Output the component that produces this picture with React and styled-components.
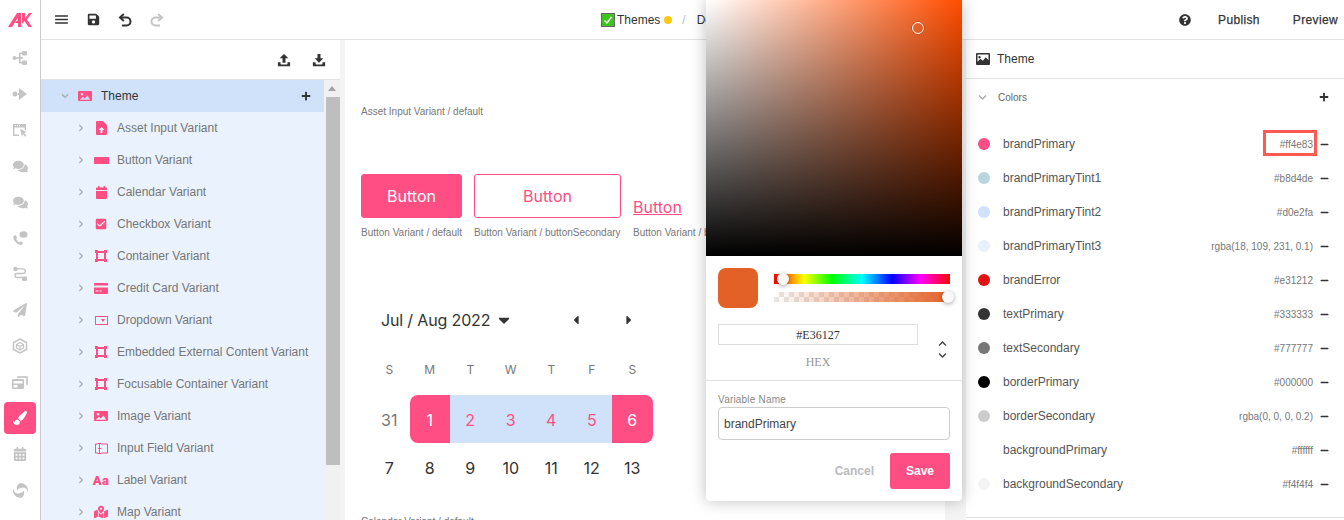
import styled, { createGlobalStyle } from 'styled-components'
import { MdMenu, MdCheckBox } from 'react-icons/md'
import { FaQuestionCircle, FaComments, FaPaperPlane, FaCalendarAlt, FaMapMarkedAlt, FaPaintBrush, FaSave, FaCaretDown, FaCaretLeft, FaCaretRight, FaChevronUp, FaChevronDown, FaChevronRight, FaPlus, FaMinus } from 'react-icons/fa'

const PINK = '#ff4e83'

const GlobalStyle = createGlobalStyle`
    html, body, #root {
        margin: 0;
        height: 100%;
        overflow: hidden;
    }
    body {
        font-family: "Liberation Sans", Arial, sans-serif;
        color: #333;
        background: #fff;
    }
`

const Page = styled.div`
    position: relative;
    display: flex;
    width: 1344px;
    height: 520px;
    overflow: hidden;
`

const Rail = styled.nav`
    display: flex;
    flex-direction: column;
    flex: none;
    width: 40px;
    border-right: 1px solid #ccc;
`

const LogoBox = styled.div`
    display: flex;
    align-items: center;
    justify-content: center;
    height: 40px;
`

const RailItem = styled.div`
    display: flex;
    align-items: center;
    justify-content: center;
    flex: none;
    width: ${p => p.$active ? '32px' : '40px'};
    height: ${p => p.$active ? '32px' : '36px'};
    margin: ${p => p.$active ? '2px 4px' : '0'};
    border-radius: 4px;
    color: ${p => p.$active ? '#fff' : '#c4c4c4'};
    background-color: ${p => p.$active ? PINK : 'transparent'};
`

const Main = styled.div`
    display: flex;
    flex-direction: column;
    flex: 1;
    min-width: 0;
`

const TopBar = styled.header`
    display: flex;
    align-items: center;
    flex: none;
    height: 39px;
    padding-left: 4px;
    border-bottom: 1px solid #e2e2e2;
`

const ToolSlot = styled.div`
    display: flex;
    align-items: center;
    justify-content: center;
    width: 32px;
    height: 32px;
    color: ${p => p.$disabled ? '#c4c4c4' : '#333'};
`

const Crumbs = styled.div`
    display: flex;
    align-items: center;
    margin-left: 428px;
    font-size: 12px;
    color: #333;
`

const DoneBox = styled.span`
    display: flex;
    align-items: center;
    justify-content: center;
    width: 12px;
    height: 12px;
    margin-right: 2px;
    border: 1px solid #666;
    background: #3fc41f;
    color: #fff;
`

const StatusDot = styled.span`
    width: 8px;
    height: 8px;
    margin-left: 4px;
    border-radius: 50%;
    background: #ffc813;
`

const Slash = styled.span`
    margin: 0 11px 0 10px;
    color: #bbb;
`

const TopActions = styled.div`
    display: flex;
    align-items: center;
    margin-left: auto;
    font-size: 12px;
    font-weight: 500;
    color: #333;
`

const HelpSlot = styled.span`
    display: flex;
    margin-right: 27px;
`

const TopLink = styled.span`
    margin-right: ${p => p.$right}px;
    letter-spacing: 0.35px;
    -webkit-text-stroke: 0.25px #333;
`

const Workspace = styled.div`
    display: flex;
    flex: 1;
    min-height: 0;
    background: #f4f4f4;
`

const TreePanel = styled.aside`
    display: flex;
    flex-direction: column;
    flex: none;
    width: 299px;
    background: #fff;
`

const TreeTools = styled.div`
    display: flex;
    align-items: center;
    justify-content: flex-end;
    flex: none;
    height: 39px;
    padding-right: 4px;
    border-bottom: 1px solid #e2e2e2;
`

const TreeTool = styled.span`
    display: flex;
    align-items: center;
    justify-content: center;
    width: 35px;
    color: #333;
`

const TreeBody = styled.div`
    display: flex;
    flex: 1;
    min-height: 0;
`

const TreeList = styled.div`
    flex: 1;
    overflow: hidden;
    background: #e9f2fd;
`

const TreeRow = styled.div`
    display: flex;
    align-items: center;
    height: 32px;
    padding-left: ${p => p.$root ? '18px' : '34px'};
    font-size: 12px;
    color: ${p => p.$root ? '#333' : '#777'};
    background: ${p => p.$root ? '#d0e2fa' : 'transparent'};
`

const Chevron = styled.span`
    display: flex;
    align-items: center;
    justify-content: center;
    flex: none;
    width: 12px;
    color: #aaa;
`

const TreeIcon = styled.span`
    display: flex;
    align-items: center;
    justify-content: center;
    flex: none;
    width: 28px;
    margin-right: 2px;
    color: ${PINK};
`

const AaIcon = styled.span`
    font-family: Roboto, sans-serif;
    font-size: 13px;
    font-weight: 900;
    letter-spacing: 0.4px;
    line-height: 1;
`

const RootLabel = styled.span`
    flex: 1;
`

const AddButton = styled.span`
    display: flex;
    margin-right: ${p => p.$inset}px;
    color: #333;
`

const ScrollTrack = styled.div`
    display: flex;
    flex-direction: column;
    align-items: center;
    flex: none;
    width: 16px;
    background: #f1f1f1;
`

const ScrollArrow = styled.span`
    width: 0;
    height: 0;
    margin: 6px 0 6px;
    border-left: 4px solid transparent;
    border-right: 4px solid transparent;
    border-bottom: 5px solid #a3a3a3;
`

const ScrollThumb = styled.div`
    width: 14px;
    height: 368px;
    margin-left: 1px;
    background: #bebebe;
`

const Canvas = styled.main`
    flex: none;
    width: 600px;
    margin-left: 5px;
    padding: 66px 0 0 16px;
    box-sizing: border-box;
    overflow: hidden;
    background: #fff;
`

const Caption = styled.div`
    font-size: 10px;
    line-height: 12px;
    color: #777;
    white-space: nowrap;
`

const ButtonRow = styled.div`
    display: flex;
    gap: 12px;
    margin-top: 56px;
`

const ButtonCol = styled.div`
    display: flex;
    flex-direction: column;
    justify-content: flex-end;
    gap: 9px;
`

const DemoButton = styled.div`
    display: flex;
    align-items: center;
    justify-content: center;
    box-sizing: border-box;
    width: ${p => p.$width}px;
    height: 44px;
    border: 1px solid ${PINK};
    border-radius: 3px;
    font-family: Inter, sans-serif;
    font-size: 16px;
    color: ${p => p.$filled ? '#fff' : PINK};
    background: ${p => p.$filled ? PINK : '#fff'};
`

const LinkButton = styled.span`
    margin-bottom: 1px;
    font-family: Inter, sans-serif;
    font-size: 16px;
    color: ${PINK};
    text-decoration: underline;
`

const Calendar = styled.section`
    width: 284px;
    margin: 69px 0 25px 8px;
    font-family: Inter, sans-serif;
`

const CalendarHead = styled.div`
    display: flex;
    align-items: center;
    height: 24px;
    padding-left: 12px;
    font-size: 16px;
    letter-spacing: -0.15px;
    color: #333;
`

const MonthLabel = styled.span`
    width: 114px;
`

const HeadCaret = styled.span`
    display: flex;
    color: #333;
    margin-left: ${p => p.$gap}px;
`

const WeekGrid = styled.div`
    display: grid;
    grid-template-columns: repeat(7, 40.5px);
`

const WeekDay = styled.div`
    display: flex;
    align-items: center;
    justify-content: center;
    height: 36px;
    font-size: 12px;
    color: #777;
`

const WeekHead = styled(WeekGrid)`
    margin-top: 19px;
    margin-bottom: 8px;
`

const DayCell = styled.div`
    display: flex;
    align-items: center;
    justify-content: center;
    height: 48px;
    padding-top: 1px;
    box-sizing: border-box;
    font-size: 16px;
    color: ${p => p.$edge ? '#fff' : p.$mid ? PINK : p.$muted ? '#777' : '#333'};
    background: ${p => p.$edge ? PINK : p.$mid ? '#d0e2fa' : 'transparent'};
    border-radius: ${p => p.$edge === 'start' ? '8px 0 0 8px' : p.$edge === 'end' ? '0 8px 8px 0' : '0'};
`

const RightPanel = styled.aside`
    flex: none;
    width: 378px;
    margin-left: 21px;
    background: #fff;
`

const PanelTitle = styled.div`
    display: flex;
    align-items: center;
    gap: 7px;
    height: 38px;
    padding-left: 10px;
    border-bottom: 1px solid #e2e2e2;
    font-size: 12px;
    color: #333;
`

const GroupHead = styled.div`
    display: flex;
    align-items: center;
    height: 36px;
    padding: 0 15px 0 10px;
    font-size: 10px;
    color: #666;
`

const GroupName = styled.span`
    flex: 1;
    margin-left: 10px;
`

const ColorList = styled.div`
    padding: 12px 0 16px;
    border-bottom: 1px solid #e2e2e2;
`

const ColorRow = styled.div`
    position: relative;
    display: flex;
    align-items: center;
    height: 34px;
    padding: 0 15px 0 12px;
`

const ColorDot = styled.span`
    flex: none;
    width: 12px;
    height: 12px;
    border-radius: 50%;
    background: ${p => p.color};
`

const ColorName = styled.span`
    flex: 1;
    margin-left: 13px;
    font-size: 12px;
    color: #555;
`

const ColorValue = styled.span`
    font-size: 10px;
    color: #777;
`

const RowMinus = styled.span`
    display: flex;
    margin-left: 7px;
    color: #333;
`

const Highlight = styled.span`
    position: absolute;
    top: 3px;
    right: 27px;
    box-sizing: border-box;
    width: 54px;
    height: 26px;
    border: 3px solid #ff5a4f;
`

const Picker = styled.div`
    position: absolute;
    top: 0;
    left: 706px;
    display: flex;
    flex-direction: column;
    width: 256px;
    height: 501px;
    border-radius: 0 0 4px 4px;
    background: #fff;
    box-shadow: 0 0 16px rgba(0, 0, 0, 0.25);
`

const SatField = styled.div`
    position: relative;
    flex: none;
    height: 256px;
    background:
        linear-gradient(to top, #000, rgba(0, 0, 0, 0)),
        linear-gradient(to right, #fff, rgba(255, 255, 255, 0)),
        #ff4d00;
`

const SatKnob = styled.span`
    position: absolute;
    top: 22px;
    left: 206px;
    box-sizing: border-box;
    width: 12px;
    height: 12px;
    border: 1px solid #fff;
    border-radius: 50%;
    box-shadow: 0 0 0 0.5px rgba(0, 0, 0, 0.4);
`

const SliderRow = styled.div`
    display: flex;
    gap: 16px;
    padding: 12px 12px 0;
`

const Swatch = styled.div`
    flex: none;
    width: 40px;
    height: 40px;
    border-radius: 8px;
    background: #e36127;
`

const Sliders = styled.div`
    display: flex;
    flex-direction: column;
    flex: 1;
    gap: 8px;
    padding-top: 6px;
`

const Slider = styled.div`
    position: relative;
    height: 10px;
`

const HueTrack = styled(Slider)`
    background: linear-gradient(to right, #f00 0%, #ff0 17%, #0f0 33%, #0ff 50%, #00f 67%, #f0f 83%, #f00 100%);
`

const AlphaTrack = styled(Slider)`
    background:
        linear-gradient(to right, rgba(227, 97, 39, 0), #e36127),
        repeating-conic-gradient(#e6e6e6 0% 25%, #fff 0% 50%) 0 0 / 10px 10px;
`

const Thumb = styled.span`
    position: absolute;
    top: -1px;
    left: ${p => p.$left}px;
    width: 12px;
    height: 12px;
    border-radius: 50%;
    background: #f8f8f8;
    box-shadow: 0 1px 4px rgba(0, 0, 0, 0.37);
`

const HexRow = styled.div`
    display: flex;
    padding: 16px 12px 0;
`

const HexField = styled.div`
    display: flex;
    flex-direction: column;
    width: 200px;
`

const HexValue = styled.div`
    box-sizing: border-box;
    height: 21px;
    border: 1px solid #ddd;
    font-family: "Liberation Serif", serif;
    font-size: 12px;
    line-height: 20px;
    text-align: center;
    color: #333;
`

const HexLabel = styled.div`
    margin-top: 10px;
    font-family: "Liberation Serif", serif;
    font-size: 12px;
    line-height: 14px;
    text-align: center;
    color: #969696;
`

const ModeToggle = styled.div`
    display: flex;
    flex-direction: column;
    align-items: center;
    gap: 3px;
    margin: 15px 0 0 20px;
    color: #444;
`

const Divider = styled.div`
    height: 1px;
    margin-top: 11px;
    background: #e2e2e2;
`

const FormBlock = styled.div`
    padding: 13px 12px 0;
`

const FieldLabel = styled.div`
    font-size: 10px;
    line-height: 12px;
    letter-spacing: 0.2px;
    color: #888;
`

const NameInput = styled.div`
    box-sizing: border-box;
    height: 33px;
    margin-top: 1px;
    padding-left: 5px;
    border: 1px solid #ccc;
    border-radius: 4px;
    font-size: 12px;
    line-height: 33px;
    color: #444;
`

const PickerActions = styled.div`
    display: flex;
    align-items: center;
    justify-content: flex-end;
    gap: 16px;
    margin-top: 13px;
    font-size: 12px;
    font-weight: 700;
`

const CancelText = styled.span`
    color: #bbb;
`

const SaveButton = styled.span`
    display: flex;
    align-items: center;
    justify-content: center;
    width: 60px;
    height: 36px;
    border-radius: 3px;
    color: #fff;
    background: ${PINK};
`

const Logo = () => (
    <svg width="24" height="14" viewBox="0 0 24 14" fill={PINK}>
        <path d="M0 14 L9 0 H13 V14 H10 V10 H7 L9 7.500 H10 V4.500 L4 14 Z" />
        <path d="M14 0 H17 V5.500 L21 0 H24 L19 6.500 L24 14 H20.500 L16.500 8 L14 11 Z" />
    </svg>
)

const Hub = () => (
    <svg width="16" height="16" viewBox="0 0 16 16" fill="currentColor">
        <circle cx="2.500" cy="8" r="2" />
        <path d="M4 7.200h3V3.500a1 1 0 0 1 1-1h2v1.600H8.600v3.100H11v1.600H8.600v3.100H10v1.600H8a1 1 0 0 1-1-1V8.800H4z" />
        <rect x="10" y="1" width="5" height="4.500" rx="1" />
        <rect x="10" y="10.500" width="5" height="4.500" rx="1" />
    </svg>
)

const DotArrow = () => (
    <svg width="16" height="14" viewBox="0 0 16 14" fill="currentColor">
        <circle cx="3" cy="7" r="2.500" />
        <path d="M6 6h1V1l8 6-8 6V8H6z" />
    </svg>
)

const WindowPick = () => (
    <svg width="16" height="16" viewBox="0 0 16 16" fill="currentColor">
        <path d="M1 2h13v6h-1.400V5.500H2.400v7H7V14H1zM3 3v1h1V3zm2 0v1h1V3zm2 0v1h1V3z" fillRule="evenodd" />
        <path d="M8 7l7 3-3 1 2.500 2.500-1.200 1.200L10.800 12 10 15z" />
    </svg>
)

const PhoneChat = () => (
    <svg width="16" height="16" viewBox="0 0 16 16" fill="currentColor">
        <path d="M3.500 5 1.300 6.200C1.300 11 5 14.800 9.800 15l1.300-2.400-2.800-1.400-1 1.200C5.800 11.500 4.700 10.200 4.100 8.700l1.100-1z" />
        <ellipse cx="11.500" cy="4.500" rx="4" ry="3.300" />
    </svg>
)

const RouteIcon = () => (
    <svg width="16" height="16" viewBox="0 0 16 16" fill="currentColor">
        <circle cx="3.500" cy="3" r="2.200" />
        <rect x="10" y="10.500" width="5" height="4.500" rx="1" />
        <path d="M5 2.200h6a3 3 0 0 1 0 6H5a1.200 1.200 0 0 0 0 2.600h5v1.400H5a2.600 2.600 0 0 1 0-5.400h6a1.600 1.600 0 0 0 0-3.200H5z" />
    </svg>
)

const CubeIcon = () => (
    <svg width="16" height="16" viewBox="0 0 16 16" fill="none" stroke="currentColor">
        <path d="M8 1 14.500 4.500v7L8 15l-6.500-3.500v-7z" strokeWidth="1.500" />
        <path d="M8 4.500l3.500 2v3.500L8 12l-3.500-2V6.500z M8 8.500v3.500 M8 8.500l3.500-2 M8 8.500l-3.500-2" strokeWidth="1.200" />
    </svg>
)

const GalleryIcon = () => (
    <svg width="16" height="14" viewBox="0 0 16 14" fill="currentColor">
        <path d="M5 2a1 1 0 0 1 1-1h9a1 1 0 0 1 1 1v7a1 1 0 0 1-1 1h-1V3H5z" opacity="0.85" />
        <path d="M0 5a1 1 0 0 1 1-1h10a1 1 0 0 1 1 1v8a1 1 0 0 1-1 1H1a1 1 0 0 1-1-1zm1.500 1v2.500h9V6zM1.500 10v2.500h4V10z" fillRule="evenodd" />
    </svg>
)

const SwirlIcon = () => (
    <svg width="15" height="15" viewBox="0 0 15 15" fill="currentColor">
        <path d="M7.500 0a7.500 7.500 0 0 1 7.300 9.200 5 5 0 0 0-7.300-4.200 3 3 0 0 0-2.900 2.500A5 5 0 0 1 7.500 0z" />
        <path d="M7.500 15A7.500 7.500 0 0 1 .2 5.800 5 5 0 0 0 7.500 10a3 3 0 0 0 2.900-2.500A5 5 0 0 1 7.500 15z" />
    </svg>
)

const UndoSvg = styled.svg`
    transform: ${p => p.$flip ? 'scaleX(-1)' : 'none'};
`

const UndoIcon = ({ flip }) => (
    <UndoSvg $flip={flip} width="14" height="14" viewBox="0 0 14 14" fill="none" stroke="currentColor" strokeWidth="2">
        <path d="M3 4.500h5.500a4 4 0 0 1 0 8H4" />
        <path d="M5.800 1 2 4.500 5.800 8" />
    </UndoSvg>
)

const TrayArrow = ({ down }) => (
    <svg width="14" height="14" viewBox="0 0 16 16" fill="currentColor">
        <path d={down ? 'M6.300 1h3.400v5H13L8 11 3 6h3.300z' : 'M8 1l5 5H9.700v5H6.300V6H3z'} />
        <path d="M1 10.500h3v1.500a1 1 0 0 0 1 1h6a1 1 0 0 0 1-1v-1.500h3V15H1z" />
    </svg>
)

const PictureIcon = ({ outline }) => (
    <svg width="14" height="12" viewBox="0 0 14 12" fill="currentColor">
        {outline
            ? <path fillRule="evenodd" d="M1 0h12a1 1 0 0 1 1 1v10a1 1 0 0 1-1 1H1a1 1 0 0 1-1-1V1a1 1 0 0 1 1-1zm.5 1.500v7.200l3-3 2.300 2 3-3.500 2.700 3V1.500zM3.500 3a1.200 1.200 0 1 1 0 2.400 1.200 1.200 0 0 1 0-2.400z" />
            : <path fillRule="evenodd" d="M1 1h12a1 1 0 0 1 1 1v8a1 1 0 0 1-1 1H1a1 1 0 0 1-1-1V2a1 1 0 0 1 1-1zm.8 8.800h10.400L9.500 5.500 6.800 8.500 4.800 6.700zM4 3a1.300 1.300 0 1 0 0 2.600A1.300 1.300 0 0 0 4 3z" />}
    </svg>
)

const FileUp = () => (
    <svg width="11" height="14" viewBox="0 0 11 14" fill="currentColor">
        <path fillRule="evenodd" d="M1 0h6l4 4v9a1 1 0 0 1-1 1H1a1 1 0 0 1-1-1V1a1 1 0 0 1 1-1zM5.500 6 2.500 9h2v3h2V9h2z" />
    </svg>
)

const SolidBar = () => (
    <svg width="15" height="7" viewBox="0 0 15 7" fill="currentColor">
        <rect width="15" height="7" rx="0.500" />
    </svg>
)

const CalendarSolid = () => (
    <svg width="11" height="13" viewBox="0 0 11 13" fill="currentColor">
        <path d="M2 0h1.500v1.500h4V0H9v1.500h1a1 1 0 0 1 1 1V4H0V2.500a1 1 0 0 1 1-1h1zM0 5h11v7a1 1 0 0 1-1 1H1a1 1 0 0 1-1-1z" />
    </svg>
)

const CardSolid = () => (
    <svg width="14" height="11" viewBox="0 0 14 11" fill="currentColor">
        <path fillRule="evenodd" d="M1 0h12a1 1 0 0 1 1 1v1.500H0V1a1 1 0 0 1 1-1zM0 4.500h14V10a1 1 0 0 1-1 1H1a1 1 0 0 1-1-1zM1.500 7.500v1h3v-1zm4 0v1h2v-1z" />
    </svg>
)

const Frame = () => (
    <svg width="12" height="12" viewBox="0 0 12 12" fill="currentColor">
        <path fillRule="evenodd" d="M0 0h3v1h6V0h3v3h-1v6h1v3H9v-1H3v1H0V9h1V3H0zm3 3v6h6V3z" />
    </svg>
)

const DropBox = () => (
    <svg width="13" height="9" viewBox="0 0 13 9" fill="currentColor">
        <path fillRule="evenodd" d="M0 0h13v9H0zm1 1v7h11V1z" />
        <path d="M6 3h4L8 6z" />
    </svg>
)

const FieldIcon = () => (
    <svg width="13" height="11" viewBox="0 0 13 11" fill="none" stroke="currentColor">
        <path d="M3 1H.5v9H3M6.500 1h6v9h-6M4.500 .5v10M3 .5h3M3 10.500h3M3 5.500h3" />
    </svg>
)

const navItems = [<Hub />, <DotArrow />, <WindowPick />, <FaComments size={15} />, <FaComments size={15} />, <PhoneChat />, <RouteIcon />, <FaPaperPlane size={14} />, <CubeIcon />, <GalleryIcon />, <FaPaintBrush size={14} />, <FaCalendarAlt size={14} />, <SwirlIcon />]

const treeItems = [
    ['Asset Input Variant', <FileUp />],
    ['Button Variant', <SolidBar />],
    ['Calendar Variant', <CalendarSolid />],
    ['Checkbox Variant', <MdCheckBox size={14} />],
    ['Container Variant', <Frame />],
    ['Credit Card Variant', <CardSolid />],
    ['Dropdown Variant', <DropBox />],
    ['Embedded External Content Variant', <Frame />],
    ['Focusable Container Variant', <Frame />],
    ['Image Variant', <PictureIcon />],
    ['Input Field Variant', <FieldIcon />],
    ['Label Variant', <AaIcon>Aa</AaIcon>],
    ['Map Variant', <FaMapMarkedAlt size={14} />],
]

const colors = [
    ['brandPrimary', '#ff4e83'],
    ['brandPrimaryTint1', '#b8d4de'],
    ['brandPrimaryTint2', '#d0e2fa'],
    ['brandPrimaryTint3', 'rgba(18, 109, 231, 0.1)'],
    ['brandError', '#e31212'],
    ['textPrimary', '#333333'],
    ['textSecondary', '#777777'],
    ['borderPrimary', '#000000'],
    ['borderSecondary', 'rgba(0, 0, 0, 0.2)'],
    ['backgroundPrimary', '#ffffff'],
    ['backgroundSecondary', '#f4f4f4'],
]

const weekDays = ['S', 'M', 'T', 'W', 'T', 'F', 'S']
const secondWeek = [7, 8, 9, 10, 11, 12, 13]

export default function App() {
    return (
        <Page>
            <GlobalStyle />
            <Rail>
                <LogoBox><Logo /></LogoBox>
                {navItems.map((icon, i) => (
                    <RailItem key={i} $active={i === 10}>{icon}</RailItem>
                ))}
            </Rail>

            <Main>
                <TopBar>
                    <ToolSlot><MdMenu size={17} /></ToolSlot>
                    <ToolSlot><FaSave size={13} /></ToolSlot>
                    <ToolSlot><UndoIcon /></ToolSlot>
                    <ToolSlot $disabled><UndoIcon flip /></ToolSlot>
                    <Crumbs>
                        <DoneBox>
                            <svg width="10" height="10" viewBox="0 0 10 10" fill="none" stroke="#fff" strokeWidth="1.300">
                                <path d="M1.500 5.500 4 8l4.500-6" />
                            </svg>
                        </DoneBox>
                        Themes
                        <StatusDot />
                        <Slash>/</Slash>
                        Default
                    </Crumbs>
                    <TopActions>
                        <HelpSlot><FaQuestionCircle size={12} /></HelpSlot>
                        <TopLink $right={33}>Publish</TopLink>
                        <TopLink $right={6}>Preview</TopLink>
                    </TopActions>
                </TopBar>

                <Workspace>
                    <TreePanel>
                        <TreeTools>
                            <TreeTool><TrayArrow /></TreeTool>
                            <TreeTool><TrayArrow down /></TreeTool>
                        </TreeTools>
                        <TreeBody>
                            <TreeList>
                                <TreeRow $root>
                                    <Chevron><FaChevronDown size={8} /></Chevron>
                                    <TreeIcon><PictureIcon /></TreeIcon>
                                    <RootLabel>Theme</RootLabel>
                                    <AddButton $inset={13}><FaPlus size={10} /></AddButton>
                                </TreeRow>
                                {treeItems.map(([label, icon]) => (
                                    <TreeRow key={label}>
                                        <Chevron><FaChevronRight size={8} /></Chevron>
                                        <TreeIcon>{icon}</TreeIcon>
                                        {label}
                                    </TreeRow>
                                ))}
                            </TreeList>
                            <ScrollTrack>
                                <ScrollArrow />
                                <ScrollThumb />
                            </ScrollTrack>
                        </TreeBody>
                    </TreePanel>

                    <Canvas>
                        <Caption>Asset Input Variant / default</Caption>
                        <ButtonRow>
                            <ButtonCol>
                                <DemoButton $filled $width={101}>Button</DemoButton>
                                <Caption>Button Variant / default</Caption>
                            </ButtonCol>
                            <ButtonCol>
                                <DemoButton $width={147}>Button</DemoButton>
                                <Caption>Button Variant / buttonSecondary</Caption>
                            </ButtonCol>
                            <ButtonCol>
                                <LinkButton>Button</LinkButton>
                                <Caption>Button Variant / buttonLink</Caption>
                            </ButtonCol>
                        </ButtonRow>

                        <Calendar>
                            <CalendarHead>
                                <MonthLabel>Jul / Aug 2022</MonthLabel>
                                <HeadCaret $gap={0}><FaCaretDown size={18} /></HeadCaret>
                                <HeadCaret $gap={56}><FaCaretLeft size={14} /></HeadCaret>
                                <HeadCaret $gap={39}><FaCaretRight size={14} /></HeadCaret>
                            </CalendarHead>
                            <WeekHead>
                                {weekDays.map((d, i) => <WeekDay key={i}>{d}</WeekDay>)}
                            </WeekHead>
                            <WeekGrid>
                                <DayCell $muted>31</DayCell>
                                <DayCell $edge="start">1</DayCell>
                                <DayCell $mid>2</DayCell>
                                <DayCell $mid>3</DayCell>
                                <DayCell $mid>4</DayCell>
                                <DayCell $mid>5</DayCell>
                                <DayCell $edge="end">6</DayCell>
                                {secondWeek.map(d => <DayCell key={d}>{d}</DayCell>)}
                            </WeekGrid>
                        </Calendar>
                        <Caption>Calendar Variant / default</Caption>
                    </Canvas>

                    <RightPanel>
                        <PanelTitle><PictureIcon outline />Theme</PanelTitle>
                        <GroupHead>
                            <Chevron><FaChevronDown size={9} /></Chevron>
                            <GroupName>Colors</GroupName>
                            <AddButton $inset={0}><FaPlus size={10} /></AddButton>
                        </GroupHead>
                        <ColorList>
                            {colors.map(([name, value], i) => (
                                <ColorRow key={name}>
                                    <ColorDot color={value} />
                                    <ColorName>{name}</ColorName>
                                    <ColorValue>{value}</ColorValue>
                                    <RowMinus><FaMinus size={9} /></RowMinus>
                                    {i === 0 && <Highlight />}
                                </ColorRow>
                            ))}
                        </ColorList>
                    </RightPanel>
                </Workspace>
            </Main>

            <Picker>
                <SatField><SatKnob /></SatField>
                <SliderRow>
                    <Swatch />
                    <Sliders>
                        <HueTrack><Thumb $left={3} /></HueTrack>
                        <AlphaTrack><Thumb $left={168} /></AlphaTrack>
                    </Sliders>
                </SliderRow>
                <HexRow>
                    <HexField>
                        <HexValue>#E36127</HexValue>
                        <HexLabel>HEX</HexLabel>
                    </HexField>
                    <ModeToggle>
                        <FaChevronUp size={9} />
                        <FaChevronDown size={9} />
                    </ModeToggle>
                </HexRow>
                <Divider />
                <FormBlock>
                    <FieldLabel>Variable Name</FieldLabel>
                    <NameInput>brandPrimary</NameInput>
                    <PickerActions>
                        <CancelText>Cancel</CancelText>
                        <SaveButton>Save</SaveButton>
                    </PickerActions>
                </FormBlock>
            </Picker>
        </Page>
    )
}
